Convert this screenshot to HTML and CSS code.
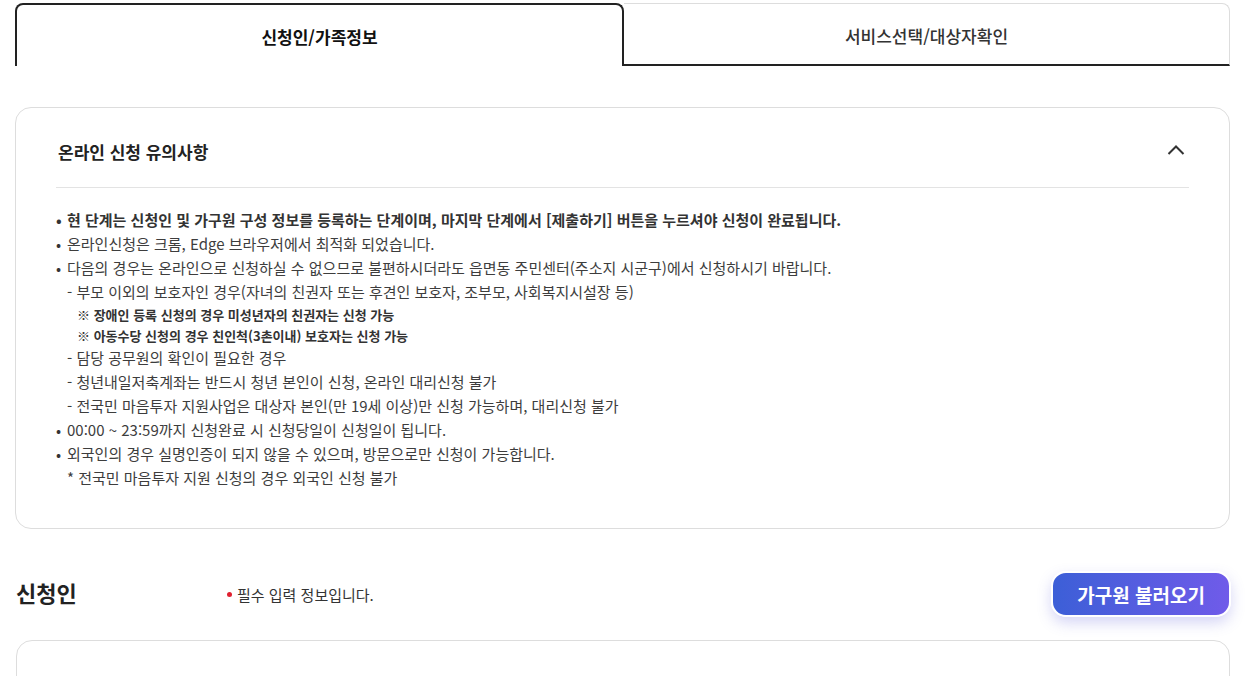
FILE: index.html
```html
<!DOCTYPE html>
<html lang="ko">

<head>
    <meta charset="UTF-8">
    <title>신청인/가족정보</title>

    <link rel="stylesheet" href="styles.css">

</head>

<body>

    <div id="wrap">
        <ul class="tabs" role="tablist">
            <li class="tab active" role="tab">신청인/가족정보</li>
            <li class="tab" role="tab">서비스선택/대상자확인</li>
        </ul>

        <div class="notice">
            <div class="notice-head">
                <h2>온라인 신청 유의사항</h2>
                <svg class="chevron" width="18" height="12" viewBox="0 0 18 12">
                    <polyline points="1.5,10 9,2.5 16.5,10" fill="none" stroke="#333" stroke-width="2" />
                </svg>
            </div>
            <ul class="notice-list">
                <li class="dot strong">현 단계는 신청인 및 가구원 구성 정보를 등록하는 단계이며, 마지막 단계에서 [제출하기] 버튼을 누르셔야 신청이 완료됩니다.</li>
                <li class="dot">온라인신청은 크롬, Edge 브라우저에서 최적화 되었습니다.</li>
                <li class="dot">다음의 경우는 온라인으로 신청하실 수 없으므로 불편하시더라도 읍면동 주민센터(주소지 시군구)에서 신청하시기 바랍니다.</li>
                <li class="sub">- 부모 이외의 보호자인 경우(자녀의 친권자 또는 후견인 보호자, 조부모, 사회복지시설장 등)</li>
                <li class="note">※ 장애인 등록 신청의 경우 미성년자의 친권자는 신청 가능</li>
                <li class="note">※ 아동수당 신청의 경우 친인척(3촌이내) 보호자는 신청 가능</li>
                <li class="sub">- 담당 공무원의 확인이 필요한 경우</li>
                <li class="sub">- 청년내일저축계좌는 반드시 청년 본인이 신청, 온라인 대리신청 불가</li>
                <li class="sub">- 전국민 마음투자 지원사업은 대상자 본인(만 19세 이상)만 신청 가능하며, 대리신청 불가</li>
                <li class="dot">00:00 ~ 23:59까지 신청완료 시 신청당일이 신청일이 됩니다.</li>
                <li class="dot">외국인의 경우 실명인증이 되지 않을 수 있으며, 방문으로만 신청이 가능합니다.</li>
                <li class="sub">* 전국민 마음투자 지원 신청의 경우 외국인 신청 불가</li>
            </ul>
        </div>

        <div class="section-head">
            <h3>신청인</h3>
            <p class="required">필수 입력 정보입니다.</p>
            <button type="button" class="btn-family">가구원 불러오기</button>
        </div>

        <div class="form-box"></div>
    </div>

</body>

</html>
```

FILE: styles.css
```css
* {
    box-sizing: border-box;
}

body {
    margin: 0;
    font-family: "Noto Sans CJK KR", "Noto Sans", sans-serif;
    color: #333;
    background: #fff;
}

#wrap {
    margin: 0 17px 0 15px;
    padding-top: 3px;
}

ul {
    margin: 0;
    padding: 0;
    list-style: none;
}

/* tabs */
.tabs {
    display: flex;
    height: 63px;
}

.tab {
    flex: 1;
    display: flex;
    align-items: center;
    justify-content: center;
    font-size: 17px;
    font-weight: 500;
    color: #333;
    border-top: 1px solid #ddd;
    border-right: 1px solid #ddd;
    border-bottom: 2px solid #222;
    border-radius: 0 8px 0 0;
    padding-top: 2px;
}

    .tab.active {
        font-weight: 700;
        color: #111;
        border: 2px solid #222;
        border-bottom: none;
        border-radius: 8px 8px 0 0;
    }

/* notice */
.notice {
    margin-top: 41px;
    border: 1px solid #ddd;
    border-radius: 16px;
    padding: 0 40px 38px;
}

.notice-head {
    display: flex;
    align-items: center;
    justify-content: space-between;
    height: 80px;
    padding-top: 8px;
    border-bottom: 1px solid #e3e3e3;
}

    .notice-head h2 {
        margin: 0 0 0 2px;
        font-size: 17px;
        font-weight: 700;
        color: #222;
    }

.chevron {
    margin-right: 4px;
    margin-top: -4px;
}

.notice-list {
    margin-top: 20px;
    font-size: 15px;
    line-height: 24px;
    color: #3d3d3d;
}

    .notice-list li {
        position: relative;
        padding-left: 11px;
    }

    .notice-list .dot::before {
        content: "•";
        position: absolute;
        left: 0;
        color: #333;
    }

    .notice-list .strong {
        font-weight: 700;
        color: #333;
    }

    .notice-list .note {
        padding-left: 21px;
        font-size: 13px;
        font-weight: 700;
        line-height: 21px;
        color: #333;
    }

/* applicant section */
.section-head {
    display: flex;
    align-items: center;
    margin-top: 42px;
}

    .section-head h3 {
        width: 211px;
        margin: 0 0 4px 1px;
        font-size: 22px;
        font-weight: 700;
        color: #222;
    }

.required {
    flex: 1;
    margin: 0;
    font-size: 15px;
    color: #333;
}

    .required::before {
        content: "";
        display: inline-block;
        width: 5px;
        height: 5px;
        margin: 0 5px 3px 0;
        border-radius: 50%;
        background: #e02030;
        vertical-align: middle;
    }

.btn-family {
    height: 46px;
    padding: 0 24px;
    margin-right: -1px;
    font-family: inherit;
    font-size: 19px;
    font-weight: 700;
    color: #fff;
    background: linear-gradient(90deg, #3c5fd7, #705be9);
    border: 2px solid #fff;
    border-radius: 15px;
    box-shadow: 0 6px 14px rgba(90, 90, 220, 0.25);
    cursor: pointer;
}

.form-box {
    margin: 23px 0 0 1px;
    height: 120px;
    border: 1px solid #ddd;
    border-radius: 16px;
}
```
